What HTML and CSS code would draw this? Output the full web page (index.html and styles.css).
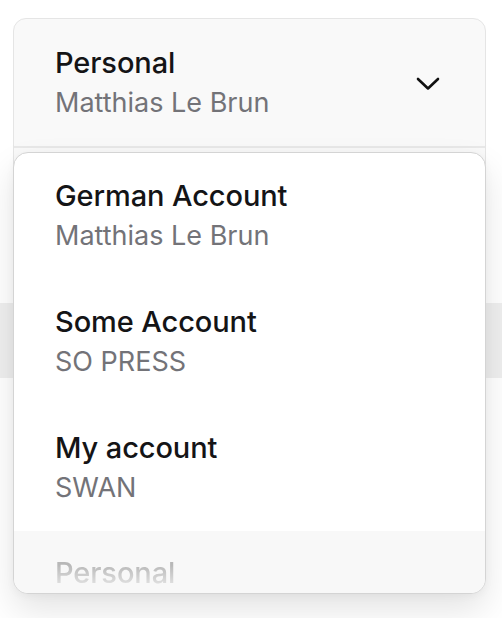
FILE: index.html
```html
<!DOCTYPE html>
<html>
<head>
<meta charset="utf-8">
<link rel="stylesheet" href="styles.css">
</head>
<body>
<div class="page">
  <div class="select">
    <div class="select-card">
      <div class="trigger">
        <div class="account">
          <div class="title">Personal</div>
          <div class="subtitle">Matthias Le Brun</div>
        </div>
        <svg class="chevron" width="24" height="14" viewBox="0 0 24 14" fill="none">
          <path d="M2 2 L12 11.5 L22 2" stroke="#111" stroke-width="2.6" stroke-linecap="round" stroke-linejoin="round"/>
        </svg>
      </div>
    </div>
    <div class="dropdown">
      <ul class="list">
        <li class="item">
          <div class="title">German Account</div>
          <div class="subtitle">Matthias Le Brun</div>
        </li>
        <li class="item">
          <div class="title">Some Account</div>
          <div class="subtitle">SO PRESS</div>
        </li>
        <li class="item">
          <div class="title">My account</div>
          <div class="subtitle">SWAN</div>
        </li>
        <li class="item item-active">
          <div class="title">Personal</div>
        </li>
      </ul>
    </div>
  </div>
  <div class="band"></div>
</div>
</body>
</html>
```
FILE: styles.css
```css
* { box-sizing: border-box; }
html, body { margin: 0; padding: 0; background: #ffffff; }
body {
  font-family: Inter, "Noto Sans", sans-serif;
  width: 502px;
  height: 618px;
  overflow: hidden;
}
.page { padding-top: 18px; }
.select {
  position: relative;
  margin-left: 13px;
  width: 473px;
}
.select-card {
  height: 212px;
  background: #f9f9f9;
  border: 1px solid #e5e5e5;
  border-radius: 13px;
  overflow: hidden;
}
.trigger {
  display: flex;
  align-items: center;
  justify-content: space-between;
  height: 129px;
  padding: 0 45px 0 41px;
  border-bottom: 2px solid #e8e8e8;
}
.title {
  font-size: 29px;
  line-height: 40px;
  color: #141416;
  font-weight: 500;
  letter-spacing: -0.1px;
}
.subtitle {
  font-size: 27px;
  line-height: 40px;
  color: #737378;
  font-weight: 400;
}
.chevron { display: block; margin-top: 2px; }
.band {
  margin-top: 73px;
  height: 75px;
  background: #efefef;
}
.dropdown {
  position: absolute;
  top: 134px;
  left: 0;
  width: 473px;
  height: 442px;
  background: #ffffff;
  border: 1.5px solid #d4d4d4;
  border-radius: 15px;
  box-shadow: 0 16px 34px rgba(0, 0, 0, 0.11), 0 2px 8px rgba(0, 0, 0, 0.04);
  overflow: hidden;
}
.list {
  list-style: none;
  margin: 0;
  padding: 0;
  height: 100%;
}
.item {
  padding: 23px 41px;
}
.item-active {
  background: #f8f8f8;
  padding-top: 22px;
}
.item-active .title {
  color: #b8b8b8;
  -webkit-mask-image: linear-gradient(to bottom, rgba(0, 0, 0, 1) 30%, rgba(0, 0, 0, 0.35) 80%);
  mask-image: linear-gradient(to bottom, rgba(0, 0, 0, 1) 30%, rgba(0, 0, 0, 0.35) 80%);
}
```
